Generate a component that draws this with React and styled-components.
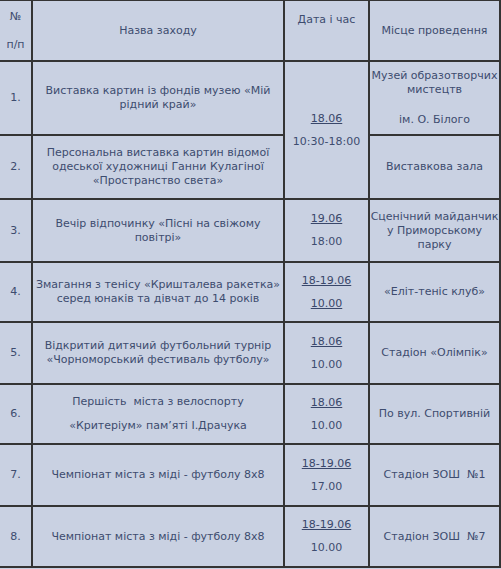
import styled, { createGlobalStyle } from 'styled-components';

const GlobalStyle = createGlobalStyle`
	html, body {
		margin: 0;
		padding: 0;
		background: #c9d1e2;
	}
	body {
		font-family: "DejaVu Sans", Verdana, sans-serif;
		font-size: 11px;
		color: #3e4d6e;
	}
`;

const Wrapper = styled.div`
	margin: -1px 0 0 -2px;
`;

const Table = styled.table`
	width: 501px;
	table-layout: fixed;
	border-collapse: collapse;
	background: #c9d1e2;
`;

const Cell = styled.td`
	border: 2px solid #343434;
	padding: 0;
	text-align: center;
	vertical-align: ${(p) => (p.$top ? 'top' : 'middle')};
	padding-top: ${(p) => (p.$top ? '12px' : '0')};
	line-height: 14px;
	color: #3d4c6f;
`;

const Row = styled.tr`
	height: ${(p) => p.$h}px;
`;

const Line = styled.div`
	margin-top: ${(p) => p.$gap || 0}px;
`;

const DateLink = styled.a`
	color: #39476a;
	text-decoration: underline;
	cursor: pointer;
`;

const Pre = styled.span`
	white-space: pre-wrap;
`;

const rows = [
	{
		n: '1.',
		h: 74,
		name: ['Виставка картин із фондів музею «Мій рідний край»'],
		date: { link: '18.06', time: '10:30-18:00', span: 2 },
		place: [
			{ t: 'Музей образотворчих мистецтв' },
			{ t: 'ім. О. Білого', gap: 16 },
		],
	},
	{
		n: '2.',
		h: 64,
		name: ['Персональна виставка картин відомої одеської художниці Ганни Кулагіної «Пространство света»'],
		date: null,
		place: [{ t: 'Виставкова зала' }],
	},
	{
		n: '3.',
		h: 63,
		name: ['Вечір відпочинку «Пісні на свіжому повітрі»'],
		date: { link: '19.06', time: '18:00' },
		place: [{ t: 'Сценічний майданчик у Приморському парку' }],
	},
	{
		n: '4.',
		h: 60,
		name: ['Змагання з тенісу «Кришталева ракетка» серед юнаків та дівчат до 14 років'],
		date: { link: '18-19.06', time: '10.00', timeLink: true },
		place: [{ t: '«Еліт-теніс клуб»' }],
	},
	{
		n: '5.',
		h: 62,
		name: ['Відкритий дитячий футбольний турнір «Чорноморський фестиваль футболу»'],
		date: { link: '18.06', time: '10.00' },
		place: [{ t: 'Стадіон «Олімпік»' }],
	},
	{
		n: '6.',
		h: 60,
		name: ['Першість  міста з велоспорту', '«Критеріум» пам’яті І.Драчука'],
		date: { link: '18.06', time: '10.00' },
		place: [{ t: 'По вул. Спортивній' }],
	},
	{
		n: '7.',
		h: 62,
		name: ['Чемпіонат міста з міді - футболу 8х8'],
		date: { link: '18-19.06', time: '17.00' },
		place: [{ t: 'Стадіон ЗОШ  №1' }],
	},
	{
		n: '8.',
		h: 61,
		name: ['Чемпіонат міста з міді - футболу 8х8'],
		date: { link: '18-19.06', time: '10.00' },
		place: [{ t: 'Стадіон ЗОШ  №7' }],
	},
];

const App = () => {
	return (
		<>
			<GlobalStyle />
			<Wrapper>
				<Table>
					<colgroup>
						<col style={{ width: 33 }} />
						<col style={{ width: 252 }} />
						<col style={{ width: 85 }} />
						<col style={{ width: 131 }} />
					</colgroup>
					<tbody>
						<Row $h={61}>
							<Cell>
								<Line>№</Line>
								<Line $gap={14}>п/п</Line>
							</Cell>
							<Cell>Назва заходу</Cell>
							<Cell $top>Дата і час</Cell>
							<Cell>Місце проведення</Cell>
						</Row>
						{rows.map((r) => (
							<Row key={r.n} $h={r.h}>
								<Cell>{r.n}</Cell>
								<Cell>
									{r.name.map((t, i) => (
										<Line key={i} $gap={i ? 10 : 0}>
											<Pre>{t}</Pre>
										</Line>
									))}
								</Cell>
								{r.date && (
									<Cell rowSpan={r.date.span || 1}>
										<Line>
											<DateLink>{r.date.link}</DateLink>
										</Line>
										<Line $gap={9}>
											{r.date.timeLink ? <DateLink>{r.date.time}</DateLink> : r.date.time}
										</Line>
									</Cell>
								)}
								<Cell>
									{r.place.map((p, i) => (
										<Line key={i} $gap={p.gap}>
											<Pre>{p.t}</Pre>
										</Line>
									))}
								</Cell>
							</Row>
						))}
					</tbody>
				</Table>
			</Wrapper>
		</>
	);
};

export default App;
